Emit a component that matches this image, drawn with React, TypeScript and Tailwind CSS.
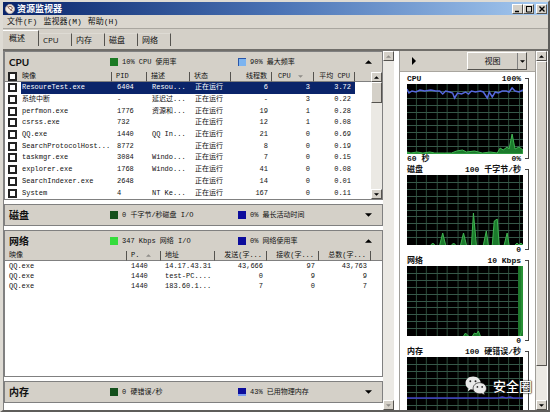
import React from "react";

const mono = "font-['Liberation_Mono','Noto_Sans_CJK_SC',monospace]";
const sans = "font-['Open_Sans','Noto_Sans_CJK_SC',sans-serif]";
const raised =
  "border border-t-white border-l-white border-r-[#55534f] border-b-[#55534f] bg-[#d4d0c8]";

type Dir = "up" | "down" | "right";

function Triangle({ dir, muted = false, wide = false }: { dir: Dir; muted?: boolean; wide?: boolean }) {
  const d = { up: "M0 4 L4 0 L8 4 Z", down: "M0 0 L8 0 L4 4 Z", right: "M0 0 L4 4 L0 8 Z" }[dir];
  const fill = muted ? "#8f8d88" : "#000";
  if (dir === "right") {
    return (
      <svg viewBox="0 0 4 8" className="h-[8px] w-[4px]" aria-hidden="true">
        <path d={d} fill={fill} />
      </svg>
    );
  }
  return (
    <svg viewBox="0 0 8 4" className={wide ? "h-[4px] w-[7px]" : "h-[3px] w-[5px]"} aria-hidden="true">
      <path d={d} fill={fill} />
    </svg>
  );
}

function ScrollBar({ thumb, muted = false }: { thumb?: string; muted?: boolean }) {
  const btn = `flex h-[10px] w-full shrink-0 items-center justify-center ${raised}`;
  return (
    <div className="flex w-[11px] shrink-0 flex-col bg-[#ebe9e4]">
      <button className={btn} aria-label="向上滚动" disabled={muted}>
        <Triangle dir="up" muted={muted} />
      </button>
      <div className="min-h-0 flex-1">{thumb && <div className={`${thumb} ${raised}`} />}</div>
      <button className={btn} aria-label="向下滚动" disabled={muted}>
        <Triangle dir="down" muted={muted} />
      </button>
    </div>
  );
}

interface Stat {
  color: string;
  text: string;
}

function SectionHeader({ title, a, b, open }: { title: string; a: Stat; b: Stat; open: boolean }) {
  return (
    <div className="flex h-[20px] shrink-0 items-center bg-[#d4d0c8] pr-[10px] pl-[4px]">
      <h2 className="w-[101px] font-['Lato','Noto_Sans_CJK_SC',sans-serif] text-[10px] leading-none font-bold">
        {title}
      </h2>
      {[a, b].map((s, i) => (
        <div key={i} className={`flex items-center gap-[4px] ${i === 0 ? "w-[128px]" : "flex-1"}`}>
          <span className={`size-[8px] ${s.color}`} />
          <span className="whitespace-nowrap">{s.text}</span>
        </div>
      ))}
      <button aria-label={open ? "折叠" : "展开"}>
        <Triangle dir={open ? "up" : "down"} wide />
      </button>
    </div>
  );
}

const processes = [
  ["ResoureTest.exe", "6404", "Resou...", "正在运行", "6", "3", "3.72"],
  ["系统中断", "-", "延迟过...", "正在运行", "-", "3", "0.22"],
  ["perfmon.exe", "1776", "资源和...", "正在运行", "19", "1", "0.28"],
  ["csrss.exe", "732", "", "正在运行", "12", "1", "0.08"],
  ["QQ.exe", "1440", "QQ In...", "正在运行", "21", "0", "0.69"],
  ["SearchProtocolHost...", "8772", "", "正在运行", "8", "0", "0.19"],
  ["taskmgr.exe", "3084", "Windo...", "正在运行", "7", "0", "0.15"],
  ["explorer.exe", "1768", "Windo...", "正在运行", "41", "0", "0.08"],
  ["SearchIndexer.exe", "2648", "", "正在运行", "14", "0", "0.01"],
  ["System", "4", "NT Ke...", "正在运行", "167", "0", "0.11"],
];

const connections = [
  ["QQ.exe", "1440", "14.17.43.31", "43,666", "97", "43,763"],
  ["QQ.exe", "1440", "test-PC....", "0", "9", "9"],
  ["QQ.exe", "1440", "183.60.1...", "7", "0", "7"],
];

const th =
  "h-[10px] border-r border-r-[#55534f] border-b border-b-[#808080] bg-[#d4d0c8] p-0 px-[4px] font-normal whitespace-nowrap overflow-hidden";
const tick = "size-[9px] appearance-none border-2 border-[#222] bg-white";

function CpuTable() {
  return (
    <table className="h-[127px] w-full table-fixed border-separate border-spacing-0 leading-none">
      <colgroup>
        <col className="w-[16px]" />
        <col />
        <col className="w-[35px]" />
        <col className="w-[43px]" />
        <col className="w-[41px]" />
        <col className="w-[41px]" />
        <col className="w-[42px]" />
        <col className="w-[41px]" />
        <col className="w-[16px]" />
      </colgroup>
      <thead>
        <tr className="text-left">
          <th className="h-[10px] border-b border-b-[#808080] bg-[#d4d0c8] p-0 pl-[3px]">
            <input type="checkbox" aria-label="全选" className={`block ${tick}`} />
          </th>
          <th className={`${th} pl-px`}>映像</th>
          <th className={th}>PID</th>
          <th className={th}>描述</th>
          <th className={th}>状态</th>
          <th className={`${th} text-right`}>线程数</th>
          <th className={th}>
            <span className="flex items-center justify-between pr-[6px] pl-[2px]">
              CPU <Triangle dir="down" muted />
            </span>
          </th>
          <th className={`${th} text-right`}>平均 CPU</th>
          <th className="border-b border-b-[#808080] bg-[#d4d0c8]" />
        </tr>
      </thead>
      <tbody>
        {processes.map((row, r) => (
          <tr key={row[0]}>
            <td className="p-0 pl-[3px]">
              <input type="checkbox" aria-label={row[0]} className={`block ${tick}`} />
            </td>
            {row.map((cell, c) => (
              <td
                key={c}
                className={`p-0 whitespace-nowrap ${c === 0 ? "pl-px" : c > 3 ? "pr-[4px] text-right" : "pl-[5px]"} ${
                  r === 0 ? "bg-[#0a246a] text-white" : ""
                }`}
              >
                {cell}
              </td>
            ))}
            <td />
          </tr>
        ))}
      </tbody>
    </table>
  );
}

function NetTable() {
  return (
    <table className="w-full table-fixed border-separate border-spacing-0 leading-none">
      <colgroup>
        <col />
        <col className="w-[34px]" />
        <col className="w-[54px]" />
        <col className="w-[52px]" />
        <col className="w-[52px]" />
        <col className="w-[52px]" />
        <col className="w-[11px]" />
      </colgroup>
      <thead>
        <tr className="text-left">
          <th className={th}>映像</th>
          <th className={th}>
            <span className="flex items-center gap-[7px]">
              P. <Triangle dir="up" muted />
            </span>
          </th>
          <th className={th}>地址</th>
          <th className={`${th} text-right`}>发送(字...</th>
          <th className={`${th} text-right`}>接收(字...</th>
          <th className={`${th} text-right`}>总数(字...</th>
          <th className="border-b border-b-[#808080] bg-[#d4d0c8]" />
        </tr>
      </thead>
      <tbody>
        {connections.map((row, r) => (
          <tr key={r}>
            {row.map((cell, c) => (
              <td
                key={c}
                className={`h-[10px] p-0 whitespace-nowrap ${c > 2 ? "pr-[4px] text-right" : "pl-[4px]"}`}
              >
                {cell}
              </td>
            ))}
            <td />
          </tr>
        ))}
      </tbody>
    </table>
  );
}

interface ChartProps {
  title: string;
  max: string;
  left?: string;
  right?: string;
  children: React.ReactNode;
}

const vLines = [9, 19, 30, 40, 51, 61, 71, 82, 92, 102, 113];
const hLines = [8, 15, 22, 29, 36, 42, 49, 56, 63];

function Chart({ title, max, left = "", right, children }: ChartProps) {
  return (
    <figure className="flex shrink-0 gap-[2px] pr-[6px] pl-[7px] text-[8px] font-bold">
      <div className="min-w-0 flex-1">
        <figcaption className="flex h-[11px] items-center justify-between pr-[2px] leading-none whitespace-nowrap">
          <span>{title}</span>
          <span>{max}</span>
        </figcaption>
        <svg viewBox="0 0 117 70" preserveAspectRatio="none" className="block h-[70px] w-full bg-black">
          {vLines.map((x) => (
            <path key={x} d={`M${x + 0.5} 0V70`} stroke="#2c4c3a" strokeWidth="1" />
          ))}
          {hLines.map((y) => (
            <path key={y} d={`M0 ${y - 0.5}H117`} stroke="#36594a" strokeWidth="1" />
          ))}
          {children}
        </svg>
        {right && (
          <div className="flex h-[10px] items-center justify-between pr-[2px] leading-none">
            <span>{left}</span>
            <span>{right}</span>
          </div>
        )}
      </div>
      <div className={`w-[4px] border border-l-0 border-[#444] ${right ? "my-[5px]" : "mt-[5px] border-b-0"}`} />
    </figure>
  );
}

const green = { stroke: "#3fb552", strokeWidth: 1, fill: "#1b7a2c" };

function Charts() {
  return (
    <>
      <Chart title="CPU" max="100%" left="60 秒" right="0%">
        <path
          d="M0 5L2 9L5 7L9 8L13 6L18 7L24 6L29 7L33 7L36 10L39 7L43 8L46 9L48 14L51 9L55 10L59 8L62 10L65 7L69 8L74 7L77 8L81 14L83 8L86 13L89 8L92 9L96 7L100 7L103 8L106 4L109 7L113 8L117 6"
          fill="none"
          stroke="#5568dc"
          strokeWidth="1.5"
        />
        <path
          d="M0 70L0 68L4 69L10 68L16 69L23 68L28 69L38 69L45 69L50 67L56 66L60 68L68 67L76 69L84 68L91 69L94 64L97 66L101 63L103 65L106 50L109 65L113 63L117 66L117 70Z"
          {...green}
        />
      </Chart>
      <Chart title="磁盘" max="100 千字节/秒" right="0">
        <path
          d="M24 70L26 68L28 70M33 70L36 58L39 70M45 70L47 68L49 70M54 70L57 58L60 70M65 70L67 38L70 70M77 70L80 56L82 70M86 70L88 46L91 44L93 70M98 70L101 58L103 70M109 70L111 68L113 70L115 68L117 70"
          {...green}
        />
      </Chart>
      <Chart title="网络" max="10 Kbps" right="0">
        <path d="M57 70L59 67L62 70M66 70L68 67L70 68L72 65L74 70" {...green} />
        <path d="M112 0H117V70H112Z" fill="#1f7a2c" />
        <path d="M114 70L116 64V0" fill="none" stroke="#35a844" />
      </Chart>
      <Chart title="内存" max="100 硬错误/秒">
        <path d="M0 41H92L96 40L100 41L104 40L107 41H117" fill="none" stroke="#4040c4" strokeWidth="1.5" />
      </Chart>
    </>
  );
}

function TitleBar() {
  const btn = `flex h-[10px] w-[11px] items-center justify-center ${raised}`;
  return (
    <header className="flex h-[13px] shrink-0 items-center bg-linear-to-r from-[#0a246a] via-[#4a72b4] to-[#a6caf0] pr-px pl-[2px]">
      <svg viewBox="0 0 20 20" className="size-[10px]" aria-hidden="true">
        <circle cx="10" cy="10" r="9" fill="#f3eee8" stroke="#b9aaa2" strokeWidth="2" />
        <path d="M5 5L10 11L15 14M7 5C15 3 17 10 11 12" fill="none" stroke="#87564c" strokeWidth="2" />
      </svg>
      <h1 className={`flex-1 pl-[2px] text-[9px] leading-none font-bold text-white ${sans}`}>资源监视器</h1>
      <div className="flex">
        <button className={btn} aria-label="最小化">
          <svg viewBox="0 0 8 8" className="size-[8px]">
            <path d="M1 6.5H5" stroke="#000" strokeWidth="1.5" />
          </svg>
        </button>
        <button className={btn} aria-label="最大化">
          <svg viewBox="0 0 8 8" className="size-[8px]">
            <path d="M1 1.5H7M1.5 1V7H6.5V1" fill="none" stroke="#000" />
          </svg>
        </button>
        <button className={`ml-[2px] ${btn}`} aria-label="关闭">
          <svg viewBox="0 0 8 8" className="size-[8px]">
            <path d="M1.5 1.5L6.5 6.5M6.5 1.5L1.5 6.5" stroke="#000" strokeWidth="1.4" />
          </svg>
        </button>
      </div>
    </header>
  );
}

function Watermark() {
  return (
    <div className="absolute right-[16px] bottom-[15px] flex items-center gap-[6px]">
      <svg viewBox="0 0 46 40" className="h-[19px] w-[22px]" aria-hidden="true">
        <path
          d="M17 1C7 1 1 7 1 15c0 5 3 9 6 11l-1 6 6-4c9 2 21-1 21-13C33 7 26 1 17 1Z"
          fill="#e9e9e9"
        />
        <path
          d="M31 14c-9 0-14 6-14 12 0 8 8 13 18 11l6 3-1-5c3-2 5-5 5-9 0-6-6-12-14-12Z"
          fill="#e9e9e9"
          stroke="#222"
          strokeWidth="1.5"
        />
        <circle cx="11" cy="11" r="2" fill="#222" />
        <circle cx="22" cy="11" r="2" fill="#222" />
        <circle cx="26" cy="23" r="1.8" fill="#222" />
        <circle cx="36" cy="23" r="1.8" fill="#222" />
      </svg>
      <span className="font-['Noto_Sans_CJK_SC',sans-serif] text-[13px] leading-none font-medium text-white [text-shadow:0_0_1px_#000,0_0_1px_#000,0_0_2px_#222]">
        安全圈
      </span>
    </div>
  );
}

const section = "shrink-0 border border-[#808080]";

export default function App() {
  const tabs = ["概述", "CPU", "内存", "磁盘", "网络"];
  return (
    <div
      className={`relative flex h-screen flex-col overflow-hidden border-t-2 border-r-2 border-b-2 border-l-[3px] border-t-[#dedbd4] border-r-[#5e5d5a] border-b-[#5e5d5a] border-l-[#dedbd4] bg-[#d4d0c8] text-[7px] leading-none text-[#111] ${mono}`}
    >
      <TitleBar />
      <nav className="flex h-[14px] shrink-0 items-center gap-[6px] border-b border-b-[#a9a69f] bg-[#dad6ce] pl-[4px] text-[8px]">
        {["文件(F)", "监视器(M)", "帮助(H)"].map((m) => (
          <button key={m} className="leading-none">
            {m}
          </button>
        ))}
      </nav>
      <div role="tablist" className={`flex h-[20px] shrink-0 items-end pb-[3px] text-[8px] ${sans}`}>
        {tabs.map((t, i) => (
          <button
            key={t}
            role="tab"
            aria-selected={i === 0}
            className={`flex items-center border-r border-r-[#55534f] leading-none ${
              i === 0
                ? "h-[16px] w-[36px] border-t border-t-white pb-[2px] pl-[6px]"
                : "h-[13px] w-[33px] border-t border-t-[#dedbd4] pl-[4px]"
            }`}
          >
            {t}
          </button>
        ))}
      </div>

      <main className="flex min-h-0 flex-1 border-t-2 border-t-[#706e6a] bg-white pr-px">
        <div className="flex min-w-0 flex-1 flex-col gap-[4px] border-l border-l-[#808080] pb-[7px]">
          <section className={section}>
            <SectionHeader
              title="CPU"
              a={{ color: "bg-[#1c7a24]", text: "10% CPU 使用率" }}
              b={{ color: "bg-[#7cb4f0] border-t border-l border-[#2a55a8]", text: "90% 最大频率" }}
              open
            />
            <div className="flex">
              <div className="min-w-0 flex-1">
                <CpuTable />
              </div>
              <ScrollBar thumb="h-[21px]" />
            </div>
          </section>
          <section className={section}>
            <SectionHeader
              title="磁盘"
              a={{ color: "bg-[#14501c]", text: "0 千字节/秒磁盘 I/O" }}
              b={{ color: "bg-[#0c0c9c]", text: "0% 最长活动时间" }}
              open={false}
            />
          </section>
          <section className="min-h-0 flex-1 border border-[#808080]">
            <SectionHeader
              title="网络"
              a={{ color: "bg-[#35dc3c]", text: "347 Kbps 网络 I/O" }}
              b={{ color: "bg-[#0c0c9c]", text: "0% 网络使用率" }}
              open
            />
            <NetTable />
          </section>
          <section className={section}>
            <SectionHeader
              title="内存"
              a={{ color: "bg-[#14501c]", text: "0 硬错误/秒" }}
              b={{ color: "bg-[#0c0c9c] border-b-2 border-[#7c9cf0]", text: "43% 已用物理内存" }}
              open={false}
            />
          </section>
        </div>
        <ScrollBar muted />
        <aside className="ml-[5px] flex w-[137px] shrink-0 flex-col overflow-hidden border-r border-l border-[#a09e99]">
          <div className="flex h-[21px] shrink-0 items-center justify-between border-b border-b-[#a9a69f] bg-[#d4d0c8] pr-[8px] pl-[12px]">
            <button aria-label="隐藏图表">
              <Triangle dir="right" />
            </button>
            <div className={`flex h-[18px] w-[60px] ${raised}`}>
              <button className={`flex-1 text-[8px] leading-none ${sans}`}>视图</button>
              <button aria-label="视图选项" className="flex w-[9px] items-center justify-center border-l border-l-[#808080]">
                <Triangle dir="down" />
              </button>
            </div>
          </div>
          <div className="flex min-h-0 flex-1 flex-col overflow-hidden pt-px">
            <Charts />
          </div>
        </aside>
        <ScrollBar thumb="h-[90%]" />
      </main>
      <Watermark />
    </div>
  );
}
